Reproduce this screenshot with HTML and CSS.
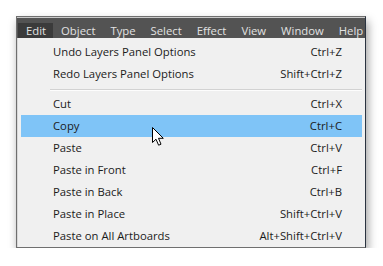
FILE: index.html
```html
<!DOCTYPE html>
<html lang="en">
<head>
    <meta charset="UTF-8">
    <title>Edit Menu</title>
    <link rel="stylesheet" href="styles.css">
</head>
<body>
    <div class="window">
        <div class="menubar">
            <span class="menubar-item active">Edit</span>
            <span class="menubar-item">Object</span>
            <span class="menubar-item">Type</span>
            <span class="menubar-item">Select</span>
            <span class="menubar-item">Effect</span>
            <span class="menubar-item">View</span>
            <span class="menubar-item">Window</span>
            <span class="menubar-item">Help</span>
        </div>
        <div class="menu">
            <div class="menu-row"><span>Undo Layers Panel Options</span><span>Ctrl+Z</span></div>
            <div class="menu-row"><span>Redo Layers Panel Options</span><span>Shift+Ctrl+Z</span></div>
            <div class="separator"></div>
            <div class="menu-row"><span>Cut</span><span>Ctrl+X</span></div>
            <div class="menu-row selected"><span>Copy</span><span>Ctrl+C</span></div>
            <div class="menu-row"><span>Paste</span><span>Ctrl+V</span></div>
            <div class="menu-row"><span>Paste in Front</span><span>Ctrl+F</span></div>
            <div class="menu-row"><span>Paste in Back</span><span>Ctrl+B</span></div>
            <div class="menu-row"><span>Paste in Place</span><span>Shift+Ctrl+V</span></div>
            <div class="menu-row"><span>Paste on All Artboards</span><span>Alt+Shift+Ctrl+V</span></div>
        </div>
    </div>

    <!-- mouse pointer over Copy -->
    <svg class="cursor" width="13" height="19" viewBox="0 0 13 19">
        <path d="M0.5 0.5 L0.5 15.5 L4 12.2 L6.6 18.2 L9 17.2 L6.5 11.3 L11.3 11.3 Z" fill="#fff" stroke="#000" stroke-width="1" stroke-linejoin="round"/>
    </svg>
</body>
</html>
```

FILE: styles.css
```css
body {
    margin: 0;
    background-color: #fff;
    font-family: "Open Sans", "Noto Sans", sans-serif;
}

.window {
    margin: 16px 0 0 16px;
    width: 348px;
    border: 1px solid #6f6f6f;
    border-right-color: #2a3340;
    box-shadow: 2px 5px 9px rgba(0, 0, 0, 0.38);
}

.menubar {
    display: flex;
    height: 20px;
    align-items: flex-end;
    background-color: #535353;
    border-top: 1px solid #c9c9c9;
    padding-left: 1px;
}

.menubar-item {
    color: #e2e2e2;
    font-size: 11.3px;
    line-height: 15px;
    padding: 0 7px 0 8px;
    white-space: nowrap;
}

.menubar-item.active {
    background-color: #3b3b3b;
}

.menu {
    background-color: #f0f0f0;
    border-left: 1px solid #d9d9d9;
    padding: 3px 3px 0 3px;
    color: #1b1b1b;
    font-size: 11.3px;
}

.menu-row {
    display: flex;
    justify-content: space-between;
    height: 22px;
    line-height: 22px;
    padding: 0 20px 0 32px;
}

.menu-row.selected {
    background-color: #7fc4f7;
}

.separator {
    height: 1px;
    margin: 4px 0 2px 29px;
    background-color: #d2d2d2;
    border-bottom: 1px solid #fdfdfd;
}

.cursor {
    position: absolute;
    left: 152px;
    top: 127px;
}
```
